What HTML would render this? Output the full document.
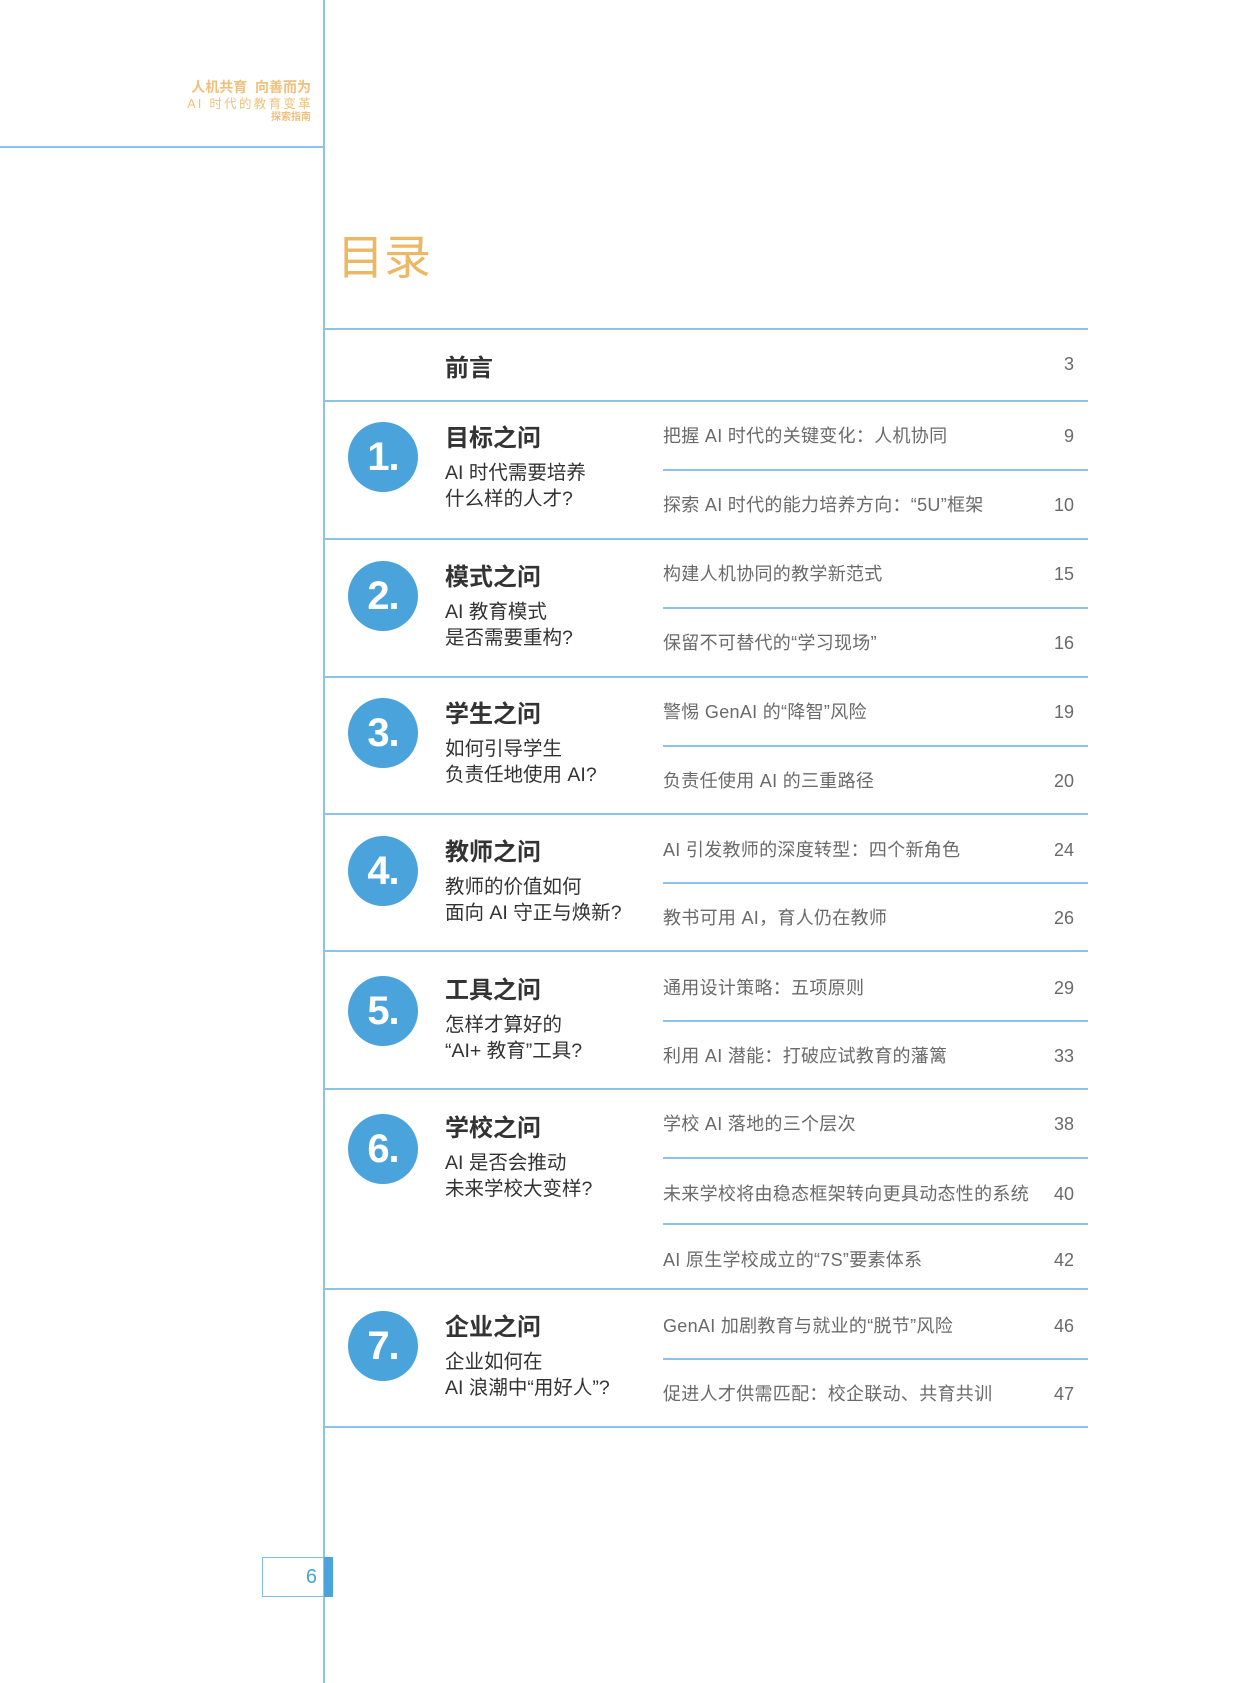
<!DOCTYPE html>
<html><head><meta charset="utf-8"><style>
*{margin:0;padding:0;box-sizing:border-box}
body{width:1240px;height:1683px;background:#fff;position:relative;overflow:hidden;font-family:"Liberation Sans","Noto Sans CJK SC",sans-serif}
.a{position:absolute;white-space:nowrap}
.hl{position:absolute;height:2px;background:#8cc4e9}
.c{position:absolute;width:70px;height:70px;border-radius:50%;background:#4aa3db;color:#fff;font-size:40px;font-weight:bold;text-align:center;line-height:70px;letter-spacing:-1px}
.t{font-size:24px;font-weight:bold;color:#333;line-height:30px;margin-top:3px}
.s{font-size:19.5px;color:#333;line-height:26px;margin-top:3px}
.i{font-size:18px;color:#6a6a6a;line-height:24px;letter-spacing:.3px;margin-top:3px}
.n{font-size:18px;color:#6a6a6a;line-height:24px;right:166px;text-align:right;margin-top:3px}
</style></head><body>
<div class="a" style="left:323px;top:0;width:2px;height:1683px;background:#8cc4e9"></div>
<div class="hl" style="left:0;top:146px;width:324px"></div>
<div class="a" style="right:929px;top:78px;font-size:14px;font-weight:bold;color:#edc17c;line-height:18px">人机共育&nbsp;&nbsp;向善而为</div>
<div class="a" style="right:929px;top:96px;font-size:12.5px;color:#edc17c;letter-spacing:2.3px;margin-right:-2px;line-height:16px">AI 时代的教育变革</div>
<div class="a" style="right:929px;top:111px;font-size:10px;font-weight:bold;color:#edc17c;line-height:13px">探索指南</div>
<div class="a" style="left:337px;top:229px;font-size:47px;color:#ebb866;line-height:58px">目录</div>

<div class="hl" style="left:324px;top:328px;width:764px"></div>
<div class="a t" style="left:445px;top:351px">前言</div>
<div class="a n" style="top:349px">3</div>

<div class="hl" style="left:324px;top:400px;width:764px"></div>
<div class="hl" style="left:324px;top:538px;width:764px"></div>
<div class="hl" style="left:324px;top:676px;width:764px"></div>
<div class="hl" style="left:324px;top:813px;width:764px"></div>
<div class="hl" style="left:324px;top:950px;width:764px"></div>
<div class="hl" style="left:324px;top:1088px;width:764px"></div>
<div class="hl" style="left:324px;top:1288px;width:764px"></div>
<div class="hl" style="left:324px;top:1426px;width:764px"></div>

<div class="hl" style="left:663px;top:469px;width:425px"></div>
<div class="hl" style="left:663px;top:607px;width:425px"></div>
<div class="hl" style="left:663px;top:745px;width:425px"></div>
<div class="hl" style="left:663px;top:882px;width:425px"></div>
<div class="hl" style="left:663px;top:1020px;width:425px"></div>
<div class="hl" style="left:663px;top:1157px;width:425px"></div>
<div class="hl" style="left:663px;top:1223px;width:425px"></div>
<div class="hl" style="left:663px;top:1358px;width:425px"></div>

<div class="c" style="left:348px;top:422px">1.</div>
<div class="a t" style="left:445px;top:421px">目标之问</div>
<div class="a s" style="left:445px;top:457px">AI 时代需要培养<br>什么样的人才?</div>
<div class="a i" style="left:663px;top:421px">把握 AI 时代的关键变化：人机协同</div><div class="a n" style="top:421px">9</div>
<div class="a i" style="left:663px;top:490px">探索 AI 时代的能力培养方向：“5U”框架</div><div class="a n" style="top:490px">10</div>

<div class="c" style="left:348px;top:561px">2.</div>
<div class="a t" style="left:445px;top:560px">模式之问</div>
<div class="a s" style="left:445px;top:596px">AI 教育模式<br>是否需要重构?</div>
<div class="a i" style="left:663px;top:559px">构建人机协同的教学新范式</div><div class="a n" style="top:559px">15</div>
<div class="a i" style="left:663px;top:628px">保留不可替代的“学习现场”</div><div class="a n" style="top:628px">16</div>

<div class="c" style="left:348px;top:698px">3.</div>
<div class="a t" style="left:445px;top:697px">学生之问</div>
<div class="a s" style="left:445px;top:733px">如何引导学生<br>负责任地使用 AI?</div>
<div class="a i" style="left:663px;top:697px">警惕 GenAI 的“降智”风险</div><div class="a n" style="top:697px">19</div>
<div class="a i" style="left:663px;top:766px">负责任使用 AI 的三重路径</div><div class="a n" style="top:766px">20</div>

<div class="c" style="left:348px;top:836px">4.</div>
<div class="a t" style="left:445px;top:835px">教师之问</div>
<div class="a s" style="left:445px;top:871px">教师的价值如何<br>面向 AI 守正与焕新?</div>
<div class="a i" style="left:663px;top:835px">AI 引发教师的深度转型：四个新角色</div><div class="a n" style="top:835px">24</div>
<div class="a i" style="left:663px;top:903px">教书可用 AI，育人仍在教师</div><div class="a n" style="top:903px">26</div>

<div class="c" style="left:348px;top:976px">5.</div>
<div class="a t" style="left:445px;top:973px">工具之问</div>
<div class="a s" style="left:445px;top:1009px">怎样才算好的<br>“AI+ 教育”工具?</div>
<div class="a i" style="left:663px;top:973px">通用设计策略：五项原则</div><div class="a n" style="top:973px">29</div>
<div class="a i" style="left:663px;top:1041px">利用 AI 潜能：打破应试教育的藩篱</div><div class="a n" style="top:1041px">33</div>

<div class="c" style="left:348px;top:1114px">6.</div>
<div class="a t" style="left:445px;top:1111px">学校之问</div>
<div class="a s" style="left:445px;top:1147px">AI 是否会推动<br>未来学校大变样?</div>
<div class="a i" style="left:663px;top:1109px">学校 AI 落地的三个层次</div><div class="a n" style="top:1109px">38</div>
<div class="a i" style="left:663px;top:1179px">未来学校将由稳态框架转向更具动态性的系统</div><div class="a n" style="top:1179px">40</div>
<div class="a i" style="left:663px;top:1245px">AI 原生学校成立的“7S”要素体系</div><div class="a n" style="top:1245px">42</div>

<div class="c" style="left:348px;top:1311px">7.</div>
<div class="a t" style="left:445px;top:1310px">企业之问</div>
<div class="a s" style="left:445px;top:1346px">企业如何在<br>AI 浪潮中“用好人”?</div>
<div class="a i" style="left:663px;top:1311px">GenAI 加剧教育与就业的“脱节”风险</div><div class="a n" style="top:1311px">46</div>
<div class="a i" style="left:663px;top:1379px">促进人才供需匹配：校企联动、共育共训</div><div class="a n" style="top:1379px">47</div>

<div class="a" style="left:262px;top:1557px;width:64px;height:40px;border:1.5px solid #7fbbe6;border-right:none"></div>
<div class="a" style="left:324px;top:1557px;width:9px;height:40px;background:#4aa3db"></div>
<div class="a" style="left:262px;top:1564px;width:55px;text-align:right;font-size:20px;color:#4aa3db;line-height:26px">6</div>
</body></html>
